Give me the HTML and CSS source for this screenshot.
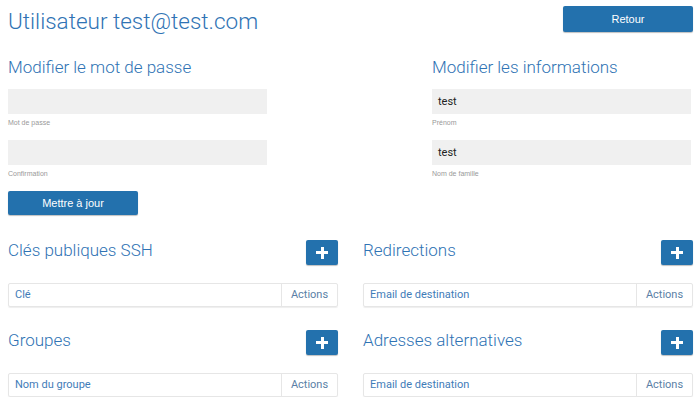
FILE: index.html
```html
<!DOCTYPE html>
<html lang="fr">
<head>
<meta charset="utf-8">
<link rel="stylesheet" href="styles.css">
</head>
<body>
<div class="page">
  <div class="top">
    <h1 class="title">Utilisateur test@test.com</h1>
    <button class="btn btn-back">Retour</button>
  </div>
  <div class="forms">
    <div class="form">
      <h2 class="h2">Modifier le mot de passe</h2>
      <div class="field"><div class="input"></div><div class="label">Mot de passe</div></div>
      <div class="field"><div class="input"></div><div class="label">Confirmation</div></div>
      <button class="btn btn-update">Mettre à jour</button>
    </div>
    <div class="form">
      <h2 class="h2">Modifier les informations</h2>
      <div class="field"><div class="input">test</div><div class="label">Prénom</div></div>
      <div class="field"><div class="input">test</div><div class="label">Nom de famille</div></div>
    </div>
  </div>
  <div class="sections">
    <div class="section">
      <div class="sec-head"><h2 class="h2">Clés publiques SSH</h2><button class="btn btn-plus"><span class="plus"></span></button></div>
      <div class="table"><div class="col-main">Clé</div><div class="col-act">Actions</div></div>
    </div>
    <div class="section">
      <div class="sec-head"><h2 class="h2">Redirections</h2><button class="btn btn-plus"><span class="plus"></span></button></div>
      <div class="table"><div class="col-main">Email de destination</div><div class="col-act">Actions</div></div>
    </div>
    <div class="section">
      <div class="sec-head"><h2 class="h2">Groupes</h2><button class="btn btn-plus"><span class="plus"></span></button></div>
      <div class="table"><div class="col-main">Nom du groupe</div><div class="col-act">Actions</div></div>
    </div>
    <div class="section">
      <div class="sec-head"><h2 class="h2">Adresses alternatives</h2><button class="btn btn-plus"><span class="plus"></span></button></div>
      <div class="table"><div class="col-main">Email de destination</div><div class="col-act">Actions</div></div>
    </div>
  </div>
</div>
</body>
</html>
```

FILE: styles.css
```css
* { box-sizing: border-box; }
body {
  margin: 0;
  background: #fff;
  font-family: Roboto, "Liberation Sans", sans-serif;
  color: #333;
}
.page {
  padding: 6px 7px 0 8px;
}
.top {
  display: flex;
  justify-content: space-between;
  align-items: flex-start;
  height: 50px;
}
.title {
  margin: 0;
  padding-top: 1px;
  font-size: 22.5px;
  font-weight: 300;
  color: #2f73b4;
  line-height: 28px;
}
.btn {
  border: 0;
  background: #2371ad;
  color: #fff;
  font-family: "Liberation Sans", Arial, sans-serif;
  font-size: 11px;
  border-radius: 2px;
  box-shadow: 0 1px 1px rgba(0,0,0,0.25);
  padding: 0;
  cursor: pointer;
}
.btn-back {
  width: 130px;
  height: 26px;
}
.forms {
  display: grid;
  grid-template-columns: 259px 259px;
  column-gap: 165px;
}
.h2 {
  margin: 0;
  font-size: 17px;
  font-weight: 300;
  color: #2f73b4;
  line-height: 22px;
}
.form .h2 {
  margin-bottom: 11px;
}
.field {
  margin-bottom: 12px;
}
.input {
  height: 25px;
  background: #f0f0f0;
  font-size: 11px;
  line-height: 25px;
  padding-left: 6px;
  color: #222;
}
.label {
  margin-top: 4px;
  font-family: "Liberation Sans", Arial, sans-serif;
  font-size: 7px;
  color: #999;
  line-height: 10px;
}
.btn-update {
  width: 130px;
  height: 24px;
  font-size: 11px;
}
.sections {
  margin-top: 23px;
  display: grid;
  grid-template-columns: 330px 330px;
  column-gap: 25px;
  row-gap: 21px;
}
.sec-head {
  display: flex;
  justify-content: space-between;
  align-items: flex-start;
  height: 45px;
}
.sec-head .h2 {
  padding-top: 1px;
}
.btn-plus {
  width: 32px;
  height: 25px;
  margin-top: 2px;
  display: flex;
  align-items: center;
  justify-content: center;
}
.plus {
  position: relative;
  width: 12px;
  height: 12px;
}
.plus::before, .plus::after {
  content: "";
  position: absolute;
  background: #fff;
}
.plus::before { left: 0; top: 4.5px; width: 12px; height: 3px; }
.plus::after { top: 0; left: 4.5px; width: 3px; height: 12px; }
.table {
  display: flex;
  height: 24px;
  border: 1px solid #e6e6e6;
  border-radius: 2px;
  box-shadow: 0 1px 1px rgba(0,0,0,0.07);
  font-size: 11px;
  line-height: 22px;
}
.col-main {
  flex: 1;
  padding-left: 6px;
  color: #3f7cb8;
}
.col-act {
  width: 56px;
  border-left: 1px solid #e6e6e6;
  text-align: center;
  color: #5a7fa6;
}
```
